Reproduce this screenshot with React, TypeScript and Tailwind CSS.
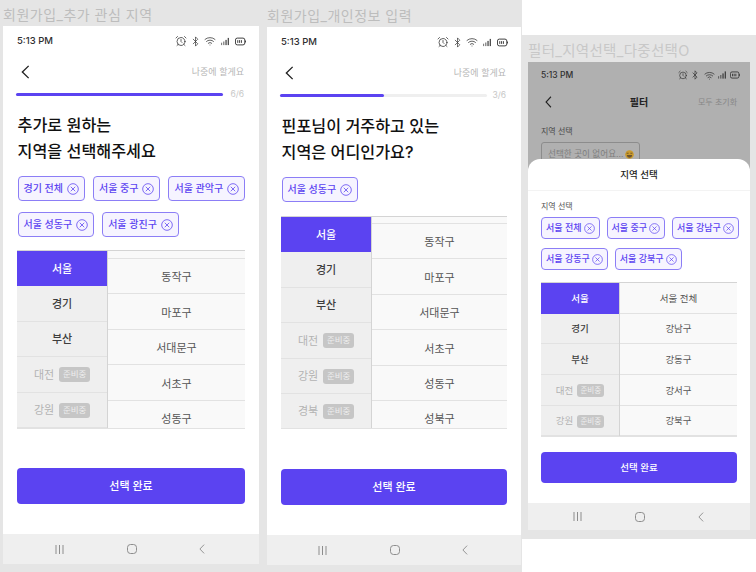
import React from 'react';
import { AlarmClock, Bluetooth, Wifi } from 'lucide-react';

const FONT = "font-['Inter','Noto_Sans_CJK_KR',sans-serif]";

const ChipX = ({ size }: { size: number }) => (
  <svg width={size} height={size} viewBox="0 0 14 14" fill="none" stroke="currentColor" strokeWidth="0.9" className="shrink-0">
    <circle cx="7" cy="7" r="6.2" />
    <path d="M4.4 4.4l5.2 5.2M9.6 4.4l-5.2 5.2" />
  </svg>
);

const Chevron: React.FC<{ className?: string }> = ({ className }) => (
  <svg viewBox="0 0 10 16" fill="none" stroke="currentColor" strokeWidth="1.5" preserveAspectRatio="none" className={className}>
    <path d="M8.5 1L1.5 8l7 7" />
  </svg>
);

const SignalIcon = ({ w, h }: { w: number; h: number }) => (
  <svg width={w} height={h} viewBox="0 0 10 9" fill="currentColor" className="shrink-0">
    <rect x="0" y="6" width="1.4" height="3" opacity="0.6" />
    <rect x="2.8" y="4.5" width="1.4" height="4.5" opacity="0.7" />
    <rect x="5.6" y="2.5" width="1.4" height="6.5" />
    <rect x="8.4" y="0" width="1.4" height="9" />
  </svg>
);

const BatteryIcon = ({ w, h }: { w: number; h: number }) => (
  <svg width={w} height={h} viewBox="0 0 12 9" fill="none" stroke="currentColor" strokeWidth="1" className="shrink-0">
    <rect x="0.5" y="0.8" width="10.2" height="7.4" rx="2" />
    <path d="M3 3v3M5 3v3M7 3v3M11.5 3.5v2" />
  </svg>
);

const StatusBar: React.FC<{ small?: boolean; className: string }> = ({ small, className }) => (
  <div className={`flex items-center justify-between text-[#2f2f2f] ${className}`}>
    <span className={small ? 'text-[8.5px] font-medium' : 'text-[9.5px] font-medium'}>5:13 PM</span>
    {small ? (
      <div className="flex items-center">
        <AlarmClock size={10} strokeWidth={1.6} />
        <Bluetooth size={10} strokeWidth={1.6} className="ml-[2.5px]" />
        <Wifi size={11} strokeWidth={1.6} className="ml-[4px]" />
        <div className="ml-[3px]">
          <SignalIcon w={8} h={8} />
        </div>
        <div className="ml-[4px]">
          <BatteryIcon w={10} h={8} />
        </div>
      </div>
    ) : (
      <div className="flex items-center">
        <AlarmClock size={12} strokeWidth={1.5} />
        <Bluetooth size={11} strokeWidth={1.5} className="ml-[3px]" />
        <Wifi size={12} strokeWidth={1.5} className="ml-[3.5px]" />
        <div className="ml-[5px]">
          <SignalIcon w={8} h={9} />
        </div>
        <div className="ml-[6px]">
          <BatteryIcon w={11} h={9} />
        </div>
      </div>
    )}
  </div>
);

const NavBar: React.FC<{ className: string }> = ({ className }) => (
  <div className={`flex items-center justify-between bg-[#efefef] text-[#8d8d8d] ${className}`}>
    <svg width="9" height="9" viewBox="0 0 9 9" stroke="currentColor" strokeWidth="1">
      <path d="M1 0v9M4.5 0v9M8 0v9" />
    </svg>
    <svg width="10" height="10" viewBox="0 0 10 10" fill="none" stroke="currentColor" strokeWidth="1">
      <rect x="0.5" y="0.5" width="9" height="9" rx="3" />
    </svg>
    <Chevron className="w-[6px] h-[10px]" />
  </div>
);

const Chip: React.FC<{ label: string }> = ({ label }) => (
  <div className="flex items-center gap-[4px] h-[25px] px-[5px] rounded-[4px] border border-[#8c7ef6] bg-[#f6f4ff] text-[#5b43f1] text-[10px] font-medium">
    <span className="whitespace-nowrap">{label}</span>
    <ChipX size={12} />
  </div>
);

const SmallChip: React.FC<{ label: string }> = ({ label }) => (
  <div className="flex items-center gap-[2px] h-[22px] px-[4px] rounded-[4px] border border-[#8c7ef6] bg-[#f6f4ff] text-[#5b43f1] text-[9px] font-medium">
    <span className="whitespace-nowrap">{label}</span>
    <ChipX size={11} />
  </div>
);

const Badge: React.FC<{ small?: boolean }> = ({ small }) => (
  <span
    className={`flex items-center justify-center rounded-[3px] bg-[#c6c6c6] text-[#eeeeee] ${
      small ? 'w-[27px] h-[13px] text-[7.5px]' : 'w-[31px] h-[15px] text-[8.5px]'
    }`}
  >
    준비중
  </span>
);

const CityRow: React.FC<{ name: string; active?: boolean; soon?: boolean; small?: boolean; rowClass: string }> = ({ name, active, soon, small, rowClass }) => {
  if (active) {
    return <div className={`flex items-center justify-center bg-[#5b43f1] text-white font-medium ${rowClass}`}>{name}</div>;
  }
  if (soon) {
    return (
      <div className={`flex items-center justify-center border-b border-[#e2e2e2] text-[#b3b3b3] ${small ? 'gap-[4px]' : 'gap-[5px]'} ${rowClass}`}>
        {name}
        <Badge small={small} />
      </div>
    );
  }
  return <div className={`flex items-center justify-center border-b border-[#e2e2e2] text-[#3d3d3d] font-medium ${rowClass}`}>{name}</div>;
};

interface SignupProps {
  phoneClass: string;
  step: string;
  progressClass: string;
  lines: string[];
  chips: string[][];
  cities: string[];
  districts: string[];
  tableClass: string;
  topRowClass: string;
  navClass: string;
}

const SignupScreen: React.FC<SignupProps> = ({ phoneClass, step, progressClass, lines, chips, cities, districts, tableClass, topRowClass, navClass }) => (
  <div className={`flex flex-col h-[538px] bg-white ${phoneClass}`}>
    <StatusBar className="h-[30px] pl-[14px] pr-[13px]" />
    <div className="flex items-center justify-between h-[32px] pl-[18px] pr-[15px]">
      <Chevron className="w-[9px] h-[14px] text-[#222222]" />
      <span className="text-[9px] text-[#b5b5b5]">나중에 할게요</span>
    </div>
    <div className="flex items-center justify-between h-[12px] pl-[13px] pr-[15px]">
      <div className="w-[207px] h-[3px] rounded-full bg-[#efefef]">
        <div className={`h-full rounded-full bg-[#5b43f1] ${progressClass}`} />
      </div>
      <span className="text-[8.5px] text-[#c8c8c8]">{step}</span>
    </div>
    <div className="mt-[12px] px-[14.5px] text-[16.2px] leading-[26px] font-medium text-[#111111]">
      {lines.map(line => (
        <div key={line}>{line}</div>
      ))}
    </div>
    <div className="mt-[12px] flex flex-col gap-[11px] px-[14.5px]">
      {chips.map(row => (
        <div key={row[0]} className="flex gap-[8px]">
          {row.map(label => (
            <Chip key={label} label={label} />
          ))}
        </div>
      ))}
    </div>
    <div className={`mx-[14px] flex overflow-hidden border-t border-b border-t-[#d4d4d4] border-b-[#e2e2e2] text-[11px] ${tableClass}`}>
      <div className="w-[91px] shrink-0 bg-[#efefef] border-r border-[#d4d4d4]">
        {cities.map((city, i) => (
          <CityRow key={city} name={city} active={i === 0} soon={i > 2} rowClass="h-[35.4px] pt-[1px]" />
        ))}
      </div>
      <div className="flex-1 bg-[#f9f9f9] text-[#555555]">
        <div className={`border-b border-[#e2e2e2] ${topRowClass}`} />
        {districts.map(name => (
          <div key={name} className="flex items-center justify-center h-[35.4px] pt-[3px] shrink-0 border-b border-[#e2e2e2]">{name}</div>
        ))}
      </div>
    </div>
    <div className="mt-[39px] mx-[14px] flex items-center justify-center h-[36px] rounded-[4px] bg-[#5b43f1] text-white text-[11px] font-medium">선택 완료</div>
    <div className="flex-1" />
    <NavBar className={`h-[30px] ${navClass}`} />
  </div>
);

const App: React.FC = () => {
  const seoulRows = ['동작구', '마포구', '서대문구', '서초구', '성동구', '성북구'];

  return (
    <div className={`flex w-[756px] h-[572px] overflow-hidden bg-white ${FONT}`}>
      <div className="w-[262px] h-full bg-[#e5e5e5] pl-[3px]">
        <div className="h-[26px] pt-[4px] text-[14px] leading-[22px] tracking-[0.5px] text-[#bdbdbd]">회원가입_추가 관심 지역</div>
        <SignupScreen
          phoneClass="w-[256px]"
          step="6/6"
          progressClass="w-full"
          lines={['추가로 원하는', '지역을 선택해주세요']}
          chips={[
            ['경기 전체', '서울 중구', '서울 관악구'],
            ['서울 성동구', '서울 광진구'],
          ]}
          cities={['서울', '경기', '부산', '대전', '강원']}
          districts={seoulRows.slice(0, 5)}
          tableClass="mt-[13px] h-[179px]"
          topRowClass="h-[8px]"
          navClass="pl-[52px] pr-[54px]"
        />
      </div>

      <div className="w-[260px] h-full bg-[#e5e5e5] pl-[5px]">
        <div className="h-[27px] pt-[5px] text-[14px] leading-[22px] tracking-[0.5px] text-[#bdbdbd]">회원가입_개인정보 입력</div>
        <SignupScreen
          phoneClass="w-[254px]"
          step="3/6"
          progressClass="w-1/2"
          lines={['핀포님이 거주하고 있는', '지역은 어디인가요?']}
          chips={[['서울 성동구']]}
          cities={['서울', '경기', '부산', '대전', '강원', '경북']}
          districts={seoulRows}
          tableClass="mt-[14px] mb-[1px] h-[213px]"
          topRowClass="h-[7px]"
          navClass="pl-[51px] pr-[53px]"
        />
      </div>

      <div className="mt-[35px] w-[234px] h-[504px] bg-[#e5e5e5] pl-[6px]">
        <div className="h-[27px] pt-[5px] text-[14.5px] leading-[22px] tracking-[0.3px] text-[#c8c8c8]">필터_지역선택_다중선택O</div>
        <div className="flex flex-col w-[222px] h-[468px]">
          <div className="relative flex-1 overflow-hidden bg-[#b0b0b0]">
            <StatusBar small className="h-[26px] pl-[13px] pr-[10px]" />
            <div className="relative flex items-center justify-center h-[28px] text-[#222222]">
              <Chevron className="absolute left-[17px] w-[7px] h-[12px]" />
              <span className="text-[10px] font-semibold">필터</span>
              <span className="absolute right-[13px] text-[8px] text-[#878787]">모두 초기화</span>
            </div>
            <div className="mt-[9px] px-[13px] text-[8px] text-[#4a4a4a]">지역 선택</div>
            <div className="mt-[5px] mx-[13px] flex items-center gap-[1px] w-[99px] h-[24px] pl-[6px] rounded-[3px] border border-[#8c8c8c] text-[8.6px] text-[#7d7d7d] whitespace-nowrap">
              선택한 곳이 없어요...
              <svg width="9" height="9" viewBox="0 0 10 10" className="shrink-0">
                <circle cx="5" cy="5" r="4.8" fill="#c99a2e" />
                <path d="M2 5.5h6C7.8 7.6 6.5 8.5 5 8.5S2.2 7.6 2 5.5z" fill="#6b5330" />
                <path d="M1.8 3.6h2.2M6 3.6h2.2" stroke="#5a4520" strokeWidth="0.8" />
              </svg>
            </div>
            <div className="absolute inset-x-0 bottom-0 h-[344px] rounded-t-[12px] bg-white">
              <div className="flex items-center justify-center h-[32px] pt-[1px] border-b border-[#f3f3f3] text-[9.5px] font-medium text-[#222222]">지역 선택</div>
              <div className="mt-[9px] px-[13px] text-[8px] text-[#555555]">지역 선택</div>
              <div className="mt-[5px] flex flex-col gap-[9px] px-[13px]">
                <div className="flex gap-[7px]">
                  <SmallChip label="서울 전체" />
                  <SmallChip label="서울 중구" />
                  <SmallChip label="서울 강남구" />
                </div>
                <div className="flex gap-[7px]">
                  <SmallChip label="서울 강동구" />
                  <SmallChip label="서울 강북구" />
                </div>
              </div>
              <div className="mt-[12px] mx-[13px] flex border-t border-b border-t-[#d4d4d4] border-b-[#e2e2e2] text-[9.5px]">
                <div className="w-[79px] shrink-0 bg-[#efefef] border-r border-[#d4d4d4]">
                  {['서울', '경기', '부산', '대전', '강원'].map((city, i) => (
                    <CityRow key={city} name={city} active={i === 0} soon={i > 2} small rowClass="h-[30.7px] pt-[2px]" />
                  ))}
                </div>
                <div className="flex-1 bg-[#f9f9f9] text-[#555555]">
                  {['서울 전체', '강남구', '강동구', '강서구', '강북구'].map(name => (
                    <div key={name} className="flex items-center justify-center h-[30.7px] pt-[2px] border-b border-[#e2e2e2]">{name}</div>
                  ))}
                </div>
              </div>
              <div className="mt-[15px] mx-[13px] flex items-center justify-center h-[31px] pt-[1px] rounded-[4px] bg-[#5b43f1] text-white text-[9.5px] font-medium">선택 완료</div>
            </div>
          </div>
          <NavBar className="h-[27px] pl-[45px] pr-[46px]" />
        </div>
      </div>
    </div>
  );
};

export default App;
